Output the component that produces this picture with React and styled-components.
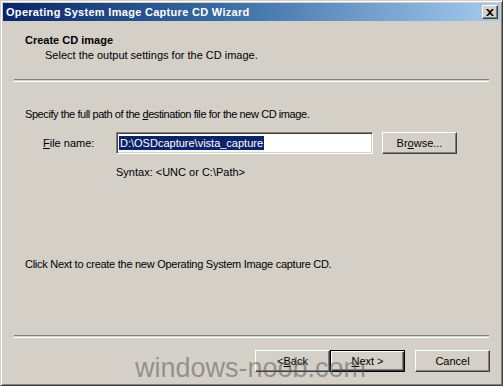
import React from "react";
import styled, { createGlobalStyle } from "styled-components";

const GlobalStyle = createGlobalStyle`
  html, body {
    margin: 0;
    padding: 0;
    background: #d4d0c8;
  }
  body {
    font-family: "Liberation Sans", Arial, sans-serif;
    font-size: 11px;
    color: #000;
  }
`;

const Window = styled.div`
  position: relative;
  box-sizing: border-box;
  width: 503px;
  height: 386px;
  background: #d4d0c8;
  border: 1px solid;
  border-color: #d4d0c8 #404040 #404040 #d4d0c8;
  box-shadow: inset 1px 1px 0 #fff, inset -1px -1px 0 #808080;
  padding: 2px;
  display: flex;
  flex-direction: column;
  overflow: hidden;
`;

const TitleBar = styled.div`
  height: 18px;
  display: flex;
  align-items: center;
  justify-content: space-between;
  padding: 0 2px 0 3px;
  background: linear-gradient(to right, #0a246a 0%, #3a6ea5 45%, #a6caf0 100%);
`;

const TitleText = styled.span`
  color: #fff;
  font-weight: bold;
  font-size: 11px;
  letter-spacing: 0.3px;
`;

const CloseButton = styled.div`
  box-sizing: border-box;
  width: 16px;
  height: 14px;
  background: #d4d0c8;
  border: 1px solid;
  border-color: #fff #404040 #404040 #fff;
  box-shadow: inset -1px -1px 0 #808080;
  display: flex;
  align-items: center;
  justify-content: center;
`;

const Header = styled.div`
  padding: 12px 0 0 22px;
  height: 58px;
  box-sizing: border-box;
`;

const HeaderTitle = styled.div`
  font-weight: bold;
  line-height: 14px;
`;

const HeaderSub = styled.div`
  padding-left: 20px;
  margin-top: 1px;
  line-height: 14px;
`;

const Separator = styled.div`
  margin: 0 11px;
  height: 1px;
  border-top: 1px solid #808080;
  border-bottom: 1px solid #fff;
`;

const Body = styled.div`
  flex: 1;
  display: flex;
  flex-direction: column;
  padding: 25px 0 0 22px;
`;

const Line = styled.div`
  line-height: 14px;
  margin-top: ${p => p.$top || 0}px;
  padding-left: ${p => p.$indent || 0}px;
  letter-spacing: ${p => p.$tight || 0}px;
`;

const FieldRow = styled.div`
  display: flex;
  align-items: center;
  margin-top: 11px;
`;

const Label = styled.span`
  width: 73px;
  padding-left: 18px;
`;

const TextInput = styled.div`
  box-sizing: border-box;
  width: 257px;
  height: 22px;
  background: #fff;
  border: 1px solid;
  border-color: #808080 #fff #fff #808080;
  box-shadow: inset 1px 1px 0 #404040, inset -1px -1px 0 #d4d0c8;
  display: flex;
  align-items: center;
  padding-left: 2px;
`;

const Selection = styled.span`
  background: #0a246a;
  color: #fff;
  line-height: 14px;
  padding: 0 1px;
`;

const Button = styled.div`
  box-sizing: border-box;
  width: 75px;
  height: 22px;
  background: #d4d0c8;
  border: 1px solid;
  border-color: ${p => (p.$default ? "#000" : "#fff #404040 #404040 #fff")};
  box-shadow: ${p =>
    p.$default
      ? "inset 1px 1px 0 #fff, inset -1px -1px 0 #404040, inset -2px -2px 0 #808080"
      : "inset -1px -1px 0 #808080"};
  display: flex;
  align-items: center;
  justify-content: center;
  margin-left: ${p => p.$gap || 0}px;
`;

const Footer = styled.div`
  display: flex;
  justify-content: flex-end;
  padding: 12px 10px 0 0;
  height: 45px;
  box-sizing: border-box;
`;

const Watermark = styled.div`
  position: absolute;
  left: 134px;
  top: 352px;
  font-family: "Liberation Sans", Arial, sans-serif;
  font-size: 27px;
  color: rgba(80, 80, 80, 0.5);
  pointer-events: none;
`;

export default function App() {
  return (
    <>
      <GlobalStyle />
      <Window>
        <TitleBar>
          <TitleText>Operating System Image Capture CD Wizard</TitleText>
          <CloseButton>
            <svg width="8" height="7" viewBox="0 0 8 7">
              <path d="M0 0h2l2 2 2-2h2L5 3.5 8 7H6L4 5 2 7H0l3-3.5z" fill="#000" />
            </svg>
          </CloseButton>
        </TitleBar>
        <Header>
          <HeaderTitle>Create CD image</HeaderTitle>
          <HeaderSub>Select the output settings for the CD image.</HeaderSub>
        </Header>
        <Separator />
        <Body>
          <Line $tight={-0.42}>
            Specify the full path of the <u>d</u>estination file for the new CD image.
          </Line>
          <FieldRow>
            <Label>
              <u>F</u>ile name:
            </Label>
            <TextInput>
              <Selection>D:\OSDcapture\vista_capture</Selection>
            </TextInput>
            <Button $gap={9}>
              Br<u>o</u>wse...
            </Button>
          </FieldRow>
          <Line $top={11} $indent={91}>
            Syntax: &lt;UNC or C:\Path&gt;
          </Line>
          <Line $top={78} $tight={-0.27}>
            Click Next to create the new Operating System Image capture CD.
          </Line>
        </Body>
        <Separator />
        <Footer>
          <Button>
            &lt; <u>B</u>ack
          </Button>
          <Button $default>
            <u>N</u>ext &gt;
          </Button>
          <Button $gap={10}>Cancel</Button>
        </Footer>
        <Watermark>windows-noob.com</Watermark>
      </Window>
    </>
  );
}
